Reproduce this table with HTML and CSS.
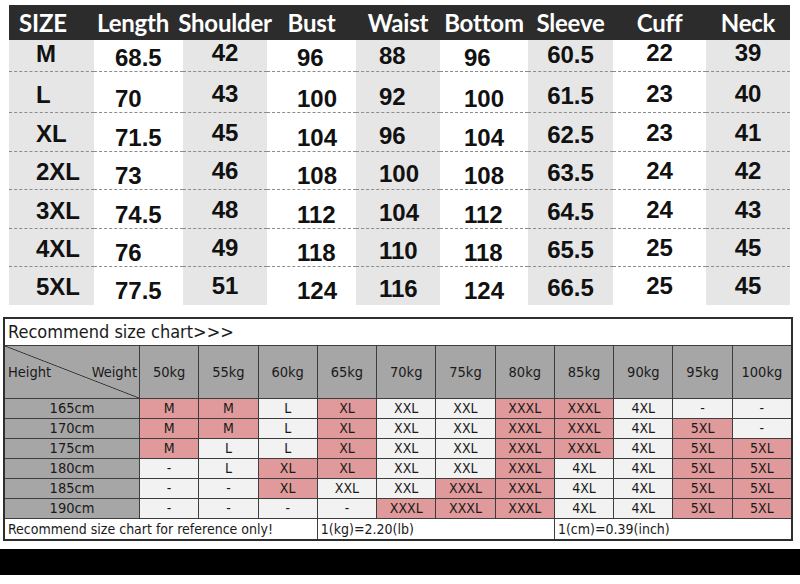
FILE: index.html
```html
<!DOCTYPE html>
<html>
<head>
<meta charset="utf-8">
<link rel="stylesheet" href="styles.css">
</head>
<body>
<div class="page">
  <div class="sizes">
    <div class="h h-size">SIZE</div><div class="h h-len">Length</div><div class="h">Shoulder</div><div class="h">Bust</div><div class="h">Waist</div><div class="h">Bottom</div><div class="h">Sleeve</div><div class="h">Cuff</div><div class="h">Neck</div>
    <div class="c">M</div><div class="c">68.5</div><div class="c">42</div><div class="c">96</div><div class="c">88</div><div class="c">96</div><div class="c">60.5</div><div class="c">22</div><div class="c">39</div>
    <div class="c">L</div><div class="c">70</div><div class="c">43</div><div class="c">100</div><div class="c">92</div><div class="c">100</div><div class="c">61.5</div><div class="c">23</div><div class="c">40</div>
    <div class="c">XL</div><div class="c">71.5</div><div class="c">45</div><div class="c">104</div><div class="c">96</div><div class="c">104</div><div class="c">62.5</div><div class="c">23</div><div class="c">41</div>
    <div class="c">2XL</div><div class="c">73</div><div class="c">46</div><div class="c">108</div><div class="c">100</div><div class="c">108</div><div class="c">63.5</div><div class="c">24</div><div class="c">42</div>
    <div class="c">3XL</div><div class="c">74.5</div><div class="c">48</div><div class="c">112</div><div class="c">104</div><div class="c">112</div><div class="c">64.5</div><div class="c">24</div><div class="c">43</div>
    <div class="c">4XL</div><div class="c">76</div><div class="c">49</div><div class="c">118</div><div class="c">110</div><div class="c">118</div><div class="c">65.5</div><div class="c">25</div><div class="c">45</div>
    <div class="c">5XL</div><div class="c">77.5</div><div class="c">51</div><div class="c">124</div><div class="c">116</div><div class="c">124</div><div class="c">66.5</div><div class="c">25</div><div class="c">45</div>
  </div>

  <div class="rec">
    <div class="title">Recommend size chart&gt;&gt;&gt;</div>
    <div class="hw"><span>Height</span><span>Weight</span></div>
    <div class="kg">50kg</div><div class="kg">55kg</div><div class="kg">60kg</div><div class="kg">65kg</div><div class="kg">70kg</div><div class="kg">75kg</div><div class="kg">80kg</div><div class="kg">85kg</div><div class="kg">90kg</div><div class="kg">95kg</div><div class="kg">100kg</div>

    <div class="ht">165cm</div>
    <div class="v p">M</div><div class="v p">M</div><div class="v">L</div><div class="v p">XL</div><div class="v">XXL</div><div class="v">XXL</div><div class="v p">XXXL</div><div class="v p">XXXL</div><div class="v">4XL</div><div class="v">-</div><div class="v">-</div>
    <div class="ht">170cm</div>
    <div class="v p">M</div><div class="v p">M</div><div class="v">L</div><div class="v p">XL</div><div class="v">XXL</div><div class="v">XXL</div><div class="v p">XXXL</div><div class="v p">XXXL</div><div class="v">4XL</div><div class="v p">5XL</div><div class="v">-</div>
    <div class="ht">175cm</div>
    <div class="v p">M</div><div class="v">L</div><div class="v">L</div><div class="v p">XL</div><div class="v">XXL</div><div class="v">XXL</div><div class="v p">XXXL</div><div class="v p">XXXL</div><div class="v">4XL</div><div class="v p">5XL</div><div class="v p">5XL</div>
    <div class="ht">180cm</div>
    <div class="v">-</div><div class="v">L</div><div class="v p">XL</div><div class="v p">XL</div><div class="v">XXL</div><div class="v">XXL</div><div class="v p">XXXL</div><div class="v">4XL</div><div class="v">4XL</div><div class="v p">5XL</div><div class="v p">5XL</div>
    <div class="ht">185cm</div>
    <div class="v">-</div><div class="v">-</div><div class="v p">XL</div><div class="v">XXL</div><div class="v">XXL</div><div class="v p">XXXL</div><div class="v p">XXXL</div><div class="v">4XL</div><div class="v">4XL</div><div class="v p">5XL</div><div class="v p">5XL</div>
    <div class="ht">190cm</div>
    <div class="v">-</div><div class="v">-</div><div class="v">-</div><div class="v">-</div><div class="v p">XXXL</div><div class="v p">XXXL</div><div class="v p">XXXL</div><div class="v">4XL</div><div class="v">4XL</div><div class="v p">5XL</div><div class="v p">5XL</div>

    <div class="ft ft1">Recommend size chart for reference only!</div>
    <div class="ft ft2">1(kg)=2.20(lb)</div>
    <div class="ft ft3">1(cm)=0.39(inch)</div>
  </div>

  <div class="bar"></div>
</div>
</body>
</html>
```

FILE: styles.css
```css
html, body {
  margin: 0;
  padding: 0;
  background: #ffffff;
}

.page {
  width: 800px;
  height: 584px;
  padding-top: 5px;
  box-sizing: border-box;
  overflow: hidden;
}

/* ---------- top measurement table ---------- */
.sizes {
  margin-left: 9px;
  width: 781px;
  display: grid;
  grid-template-columns: 85px 89px 84px 89px 84px 88px 85px 93px 84px;
  grid-template-rows: 35px 32px 41px 39px 38px 39px 38px 38px;
  background: linear-gradient(#2c2c2c, #2c2c2c) top left / 100% 35px no-repeat;
}

.h {
  color: #ffffff;
  font-family: Lato, "Open Sans", sans-serif;
  font-weight: 700;
  font-size: 24px;
  line-height: 35px;
  white-space: nowrap;
  display: flex;
  justify-content: center;
  letter-spacing: -0.2px;
}

.h-size {
  justify-content: flex-start;
  padding-left: 10px;
}

.h-len {
  justify-content: flex-start;
  padding-left: 3px;
}

.c {
  font-family: "Liberation Sans", Arial, sans-serif;
  font-weight: 700;
  font-size: 24px;
  line-height: 24px;
  color: #111111;
  display: flex;
  align-items: flex-end;
  box-sizing: border-box;
  border-bottom: 1px dashed #8c8c8c;
  white-space: nowrap;
  background: #ffffff;
}

.c:nth-last-child(-n+9) {
  border-bottom-color: transparent;
}

/* column-wise alignment and shading */
.c:nth-child(9n+1) { padding-left: 27px; padding-bottom: 5px; background: #e6e6e6; }
.c:nth-child(9n+2) { padding-left: 21px; padding-bottom: 1px; }
.c:nth-child(9n+3) { justify-content: center; padding-bottom: 6px; background: #e6e6e6; }
.c:nth-child(9n+4) { padding-left: 30px; padding-bottom: 1px; }
.c:nth-child(9n+5) { padding-left: 23px; padding-bottom: 3px; background: #e6e6e6; }
.c:nth-child(9n+6) { padding-left: 24px; padding-bottom: 1px; }
.c:nth-child(9n+7) { justify-content: center; padding-bottom: 4px; background: #e6e6e6; }
.c:nth-child(9n+8) { justify-content: center; padding-bottom: 6px; }
.c:nth-child(9n+9) { justify-content: center; padding-bottom: 6px; background: #e6e6e6; }

/* ---------- recommend chart ---------- */
.rec {
  margin-top: 12px;
  margin-left: 3px;
  width: 790px;
  box-sizing: border-box;
  border: 2px solid #2e2e2e;
  background: #3d3d3d;
  display: grid;
  grid-template-columns: 134px repeat(11, 1fr);
  grid-template-rows: 26px 52px repeat(6, 19px) 20px;
  gap: 1px;
  font-family: "DejaVu Sans Condensed", "DejaVu Sans", sans-serif;
  font-stretch: condensed;
  color: #1a1a1a;
}

.title {
  grid-column: 1 / -1;
  background: #ffffff;
  font-size: 18px;
  line-height: 26px;
  padding-left: 3px;
  white-space: nowrap;
}

.hw {
  background-color: #a6a6a6;
  background-image: linear-gradient(to top right, transparent calc(50% - 0.8px), #2a2a2a 50%, transparent calc(50% + 0.8px));
  display: flex;
  justify-content: space-between;
  align-items: center;
  padding: 0 2px 0 3px;
  font-size: 14.5px;
}

.kg {
  background: #a6a6a6;
  display: flex;
  align-items: center;
  justify-content: center;
  font-size: 14.5px;
}

.ht {
  background: #a6a6a6;
  display: flex;
  align-items: center;
  justify-content: center;
  font-size: 14.5px;
  line-height: 19px;
}

.v {
  background: #f2f2f2;
  display: flex;
  align-items: center;
  justify-content: center;
  font-size: 14px;
  line-height: 19px;
}

.v.p {
  background: #e09a9b;
}

.ft {
  background: #ffffff;
  font-size: 14px;
  line-height: 20px;
  padding-left: 3px;
  white-space: nowrap;
}

.ft1 { grid-column: 1 / 5; }
.ft2 { grid-column: 5 / 9; }
.ft3 { grid-column: 9 / 13; }

.bar {
  margin-top: 8px;
  height: 26px;
  background: #000000;
}
```
